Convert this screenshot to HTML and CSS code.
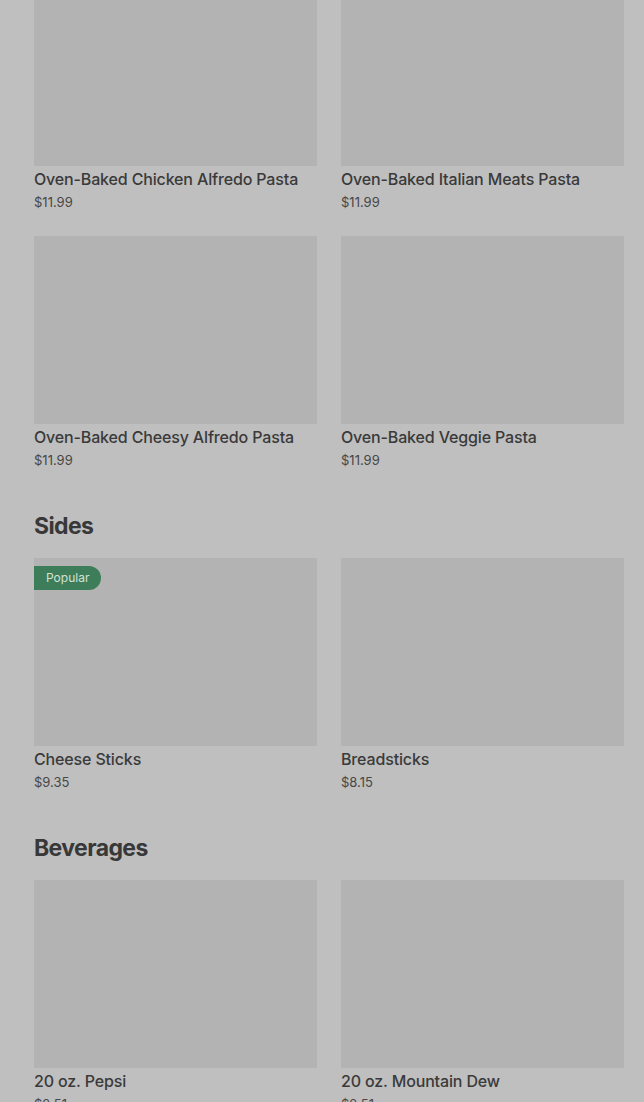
FILE: index.html
```html
<!DOCTYPE html>
<html lang="en">
<head>
  <meta charset="UTF-8">
  <meta name="viewport" content="width=device-width, initial-scale=1.0">
  <title>Menu</title>
  <link rel="stylesheet" href="styles.css">
</head>
<body>
  <div class="menu">
    <section class="menu-section">
      <div class="item-grid">
        <div class="item">
          <div class="item-img"></div>
          <div class="item-name">Oven-Baked Chicken Alfredo Pasta</div>
          <div class="item-price">$11.99</div>
        </div>
        <div class="item">
          <div class="item-img"></div>
          <div class="item-name">Oven-Baked Italian Meats Pasta</div>
          <div class="item-price">$11.99</div>
        </div>
        <div class="item">
          <div class="item-img"></div>
          <div class="item-name">Oven-Baked Cheesy Alfredo Pasta</div>
          <div class="item-price">$11.99</div>
        </div>
        <div class="item">
          <div class="item-img"></div>
          <div class="item-name">Oven-Baked Veggie Pasta</div>
          <div class="item-price">$11.99</div>
        </div>
      </div>
    </section>

    <section class="menu-section">
      <h2 class="section-title">Sides</h2>
      <div class="item-grid">
        <div class="item">
          <div class="item-img">
            <span class="badge">Popular</span>
          </div>
          <div class="item-name">Cheese Sticks</div>
          <div class="item-price">$9.35</div>
        </div>
        <div class="item">
          <div class="item-img"></div>
          <div class="item-name">Breadsticks</div>
          <div class="item-price">$8.15</div>
        </div>
      </div>
    </section>

    <section class="menu-section">
      <h2 class="section-title">Beverages</h2>
      <div class="item-grid">
        <div class="item">
          <div class="item-img"></div>
          <div class="item-name">20 oz. Pepsi</div>
          <div class="item-price">$2.51</div>
        </div>
        <div class="item">
          <div class="item-img"></div>
          <div class="item-name">20 oz. Mountain Dew</div>
          <div class="item-price">$2.51</div>
        </div>
      </div>
    </section>
  </div>
</body>
</html>
```

FILE: styles.css
```css
body {
  margin: 0;
  background: #bfbfbf;
  font-family: Inter, "Liberation Sans", sans-serif;
  color: #3a3a3a;
}
.menu {
  padding: 0 20px 0 34px;
  margin-top: -22px;
}
.menu-section {
  margin-bottom: 40px;
}
.section-title {
  margin: 0 0 16px;
  font-size: 23px;
  line-height: 32px;
  font-weight: 700;
  letter-spacing: -0.6px;
  color: #383838;
}
.item-grid {
  display: grid;
  grid-template-columns: 1fr 1fr;
  column-gap: 24px;
  row-gap: 24px;
}
.item-img {
  position: relative;
  height: 188px;
  background: #b3b3b3;
}
.item-name {
  margin-top: 3px;
  font-size: 16px;
  line-height: 20px;
  font-weight: 500;
  letter-spacing: -0.15px;
  color: #3a3a3a;
}
.item-price {
  margin-top: 3px;
  font-size: 13px;
  line-height: 20px;
  color: #474747;
}
.badge {
  position: absolute;
  top: 8px;
  left: 0;
  height: 24px;
  line-height: 24px;
  padding: 0 12px;
  border-radius: 0 12px 12px 0;
  background: #3e7d5a;
  color: #d2e2d6;
  font-size: 12px;
}
```
